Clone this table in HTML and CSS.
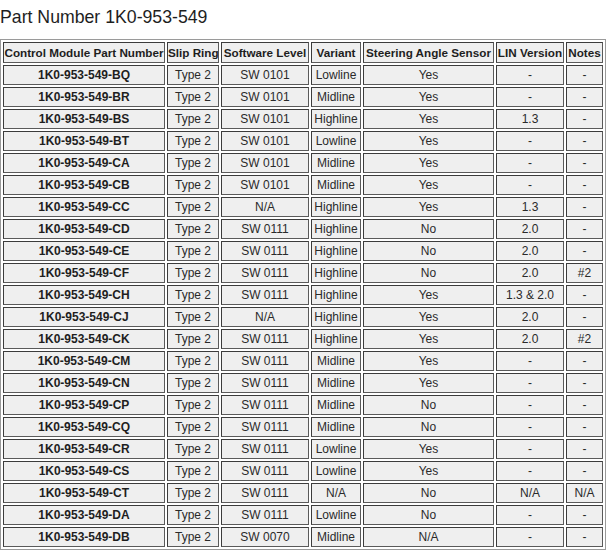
FILE: index.html
```html
<!DOCTYPE html>
<html>
<head>
<meta charset="utf-8">
<link rel="stylesheet" href="styles.css">
</head>
<body>
<div class="title">Part Number 1K0-953-549</div>
<table class="parts">
<thead>
<tr><th class="c1">Control Module Part Number</th><th class="c2">Slip Ring</th><th class="c3">Software Level</th><th class="c4">Variant</th><th class="c5">Steering Angle Sensor</th><th class="c6">LIN Version</th><th class="c7">Notes</th></tr>
</thead>
<tbody>
<tr><td class="pn">1K0-953-549-BQ</td><td>Type 2</td><td>SW 0101</td><td>Lowline</td><td>Yes</td><td>-</td><td>-</td></tr>
<tr><td class="pn">1K0-953-549-BR</td><td>Type 2</td><td>SW 0101</td><td>Midline</td><td>Yes</td><td>-</td><td>-</td></tr>
<tr><td class="pn">1K0-953-549-BS</td><td>Type 2</td><td>SW 0101</td><td>Highline</td><td>Yes</td><td>1.3</td><td>-</td></tr>
<tr><td class="pn">1K0-953-549-BT</td><td>Type 2</td><td>SW 0101</td><td>Lowline</td><td>Yes</td><td>-</td><td>-</td></tr>
<tr><td class="pn">1K0-953-549-CA</td><td>Type 2</td><td>SW 0101</td><td>Midline</td><td>Yes</td><td>-</td><td>-</td></tr>
<tr><td class="pn">1K0-953-549-CB</td><td>Type 2</td><td>SW 0101</td><td>Midline</td><td>Yes</td><td>-</td><td>-</td></tr>
<tr><td class="pn">1K0-953-549-CC</td><td>Type 2</td><td>N/A</td><td>Highline</td><td>Yes</td><td>1.3</td><td>-</td></tr>
<tr><td class="pn">1K0-953-549-CD</td><td>Type 2</td><td>SW 0111</td><td>Highline</td><td>No</td><td>2.0</td><td>-</td></tr>
<tr><td class="pn">1K0-953-549-CE</td><td>Type 2</td><td>SW 0111</td><td>Highline</td><td>No</td><td>2.0</td><td>-</td></tr>
<tr><td class="pn">1K0-953-549-CF</td><td>Type 2</td><td>SW 0111</td><td>Highline</td><td>No</td><td>2.0</td><td>#2</td></tr>
<tr><td class="pn">1K0-953-549-CH</td><td>Type 2</td><td>SW 0111</td><td>Highline</td><td>Yes</td><td>1.3 &amp; 2.0</td><td>-</td></tr>
<tr><td class="pn">1K0-953-549-CJ</td><td>Type 2</td><td>N/A</td><td>Highline</td><td>Yes</td><td>2.0</td><td>-</td></tr>
<tr><td class="pn">1K0-953-549-CK</td><td>Type 2</td><td>SW 0111</td><td>Highline</td><td>Yes</td><td>2.0</td><td>#2</td></tr>
<tr><td class="pn">1K0-953-549-CM</td><td>Type 2</td><td>SW 0111</td><td>Midline</td><td>Yes</td><td>-</td><td>-</td></tr>
<tr><td class="pn">1K0-953-549-CN</td><td>Type 2</td><td>SW 0111</td><td>Midline</td><td>Yes</td><td>-</td><td>-</td></tr>
<tr><td class="pn">1K0-953-549-CP</td><td>Type 2</td><td>SW 0111</td><td>Midline</td><td>No</td><td>-</td><td>-</td></tr>
<tr><td class="pn">1K0-953-549-CQ</td><td>Type 2</td><td>SW 0111</td><td>Midline</td><td>No</td><td>-</td><td>-</td></tr>
<tr><td class="pn">1K0-953-549-CR</td><td>Type 2</td><td>SW 0111</td><td>Lowline</td><td>Yes</td><td>-</td><td>-</td></tr>
<tr><td class="pn">1K0-953-549-CS</td><td>Type 2</td><td>SW 0111</td><td>Lowline</td><td>Yes</td><td>-</td><td>-</td></tr>
<tr><td class="pn">1K0-953-549-CT</td><td>Type 2</td><td>SW 0111</td><td>N/A</td><td>No</td><td>N/A</td><td>N/A</td></tr>
<tr><td class="pn">1K0-953-549-DA</td><td>Type 2</td><td>SW 0111</td><td>Lowline</td><td>No</td><td>-</td><td>-</td></tr>
<tr><td class="pn">1K0-953-549-DB</td><td>Type 2</td><td>SW 0070</td><td>Midline</td><td>N/A</td><td>-</td><td>-</td></tr>
</tbody>
</table>
</body>
</html>
```
FILE: styles.css
```css
html, body {
  margin: 0;
  padding: 0;
  background: #ffffff;
}
body {
  font-family: "Liberation Sans", Arial, sans-serif;
  color: #2a2a2a;
}
.title {
  font-size: 17.7px;
  line-height: 21px;
  padding-top: 7px;
  margin-bottom: 11px;
  color: #1e1e1e;
}
.parts {
  table-layout: fixed;
  width: 606px;
  border: 1px solid #9a9a9a;
  border-spacing: 2px;
  font-size: 12px;
}
.parts th,
.parts td {
  box-sizing: border-box;
  background: #efefef;
  border: 1px solid #3c3c3c;
  border-right-color: #5a5a5a;
  border-bottom-color: #5a5a5a;
  padding: 2px 0;
  line-height: 14px;
  height: 20px;
  text-align: center;
  white-space: nowrap;
  overflow: hidden;
}
.parts th {
  font-size: 11.7px;
  font-weight: bold;
  color: #1e1e1e;
  height: 21px;
  padding: 3px 0 2px;
}
.parts td.pn {
  font-weight: bold;
  color: #1e1e1e;
}
.parts .c1 { width: 162px; }
.parts .c2 { width: 52px; }
.parts .c3 { width: 88px; }
.parts .c4 { width: 50px; }
.parts .c5 { width: 131px; }
.parts .c6 { width: 68px; }
.parts .c7 { width: 37px; }
```
